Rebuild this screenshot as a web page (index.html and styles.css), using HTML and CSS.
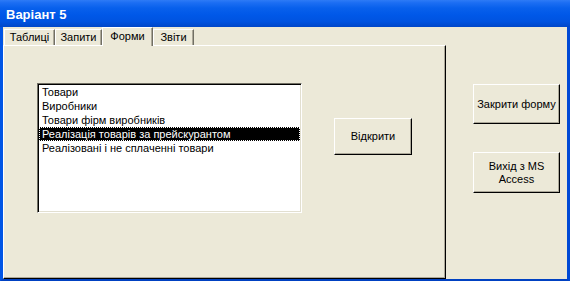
FILE: index.html
```html
<!DOCTYPE html>
<html>
<head>
<meta charset="utf-8">
<link rel="stylesheet" href="styles.css">
</head>
<body>
<div class="window">
  <div class="titlebar"><span class="title">Варіант 5</span></div>
  <div class="frame">
    <div class="tabctl">
      <div class="tabs">
        <div class="tab w1">Таблиці</div>
        <div class="tab w2">Запити</div>
        <div class="tab active w3">Форми</div>
        <div class="tab w4">Звіти</div>
      </div>
      <div class="panel">
        <div class="listbox">
          <div class="item">Товари</div>
          <div class="item">Виробники</div>
          <div class="item">Товари фірм виробників</div>
          <div class="item selected">Реалізація товарів за прейскурантом</div>
          <div class="item">Реалізовані і не сплаченні товари</div>
        </div>
        <button class="btn open">Відкрити</button>
      </div>
    </div>
    <div class="side">
      <button class="btn close">Закрити форму</button>
      <button class="btn exit">Вихід з MS<br>Access</button>
    </div>
  </div>
</div>
</body>
</html>
```

FILE: styles.css
```css
html, body {
  margin: 0;
  padding: 0;
  background: #ECE9D8;
}
body {
  font-family: "Liberation Sans", Arial, sans-serif;
  font-size: 11px;
  color: #000;
}
.window {
  width: 570px;
  height: 281px;
  display: flex;
  flex-direction: column;
  background: #ECE9D8;
}
.titlebar {
  height: 27px;
  flex: none;
  display: flex;
  align-items: center;
  padding-left: 6px;
  background: linear-gradient(to bottom, #2E7BF6 0%, #1C6EF3 10%, #0860EC 30%, #0058E8 55%, #0053E0 80%, #0046C8 100%);
}
.title {
  color: #fff;
  font-weight: bold;
  font-size: 13px;
  padding-top: 1px;
}
.frame {
  flex: 1;
  display: flex;
  border-left: 3px solid #0055E5;
  border-right: 3px solid #0049D5;
  border-bottom: 2px solid #0041C2;
  min-height: 0;
}
.tabctl {
  width: 443px;
  display: flex;
  flex-direction: column;
}
.tabs {
  height: 18px;
  display: flex;
  align-items: flex-end;
  padding-left: 1px;
}
.tab {
  box-sizing: border-box;
  height: 16px;
  border-top: 1px solid #fff;
  border-left: 1px solid #fff;
  border-right: 1px solid #716F64;
  box-shadow: inset -1px 0 #ACA899;
  text-align: center;
  line-height: 15px;
  background: #ECE9D8;
}
.w1 { width: 51px; }
.w2 { width: 47px; }
.w3 { width: 51px; }
.w4 { width: 41px; }
.tab.active {
  height: 19px;
  margin-bottom: -1px;
  line-height: 16px;
  z-index: 1;
}
.panel {
  box-sizing: border-box;
  flex: 1;
  display: flex;
  align-items: flex-start;
  border-top: 1px solid #fff;
  border-left: 1px solid #fff;
  border-right: 1px solid #000;
  border-bottom: 1px solid #000;
  box-shadow: inset -1px -1px #ACA899;
}
.listbox {
  box-sizing: border-box;
  width: 265px;
  height: 130px;
  margin-left: 33px;
  margin-top: 37px;
  background: #fff;
  border-top: 1px solid #716F64;
  border-left: 1px solid #716F64;
  border-right: 1px solid #fff;
  border-bottom: 1px solid #fff;
  box-shadow: inset 1px 1px #000, inset -1px -1px #E2DFD0;
  padding: 1px 1px 0 1px;
}
.item {
  box-sizing: border-box;
  height: 14px;
  line-height: 14px;
  padding-left: 3px;
  white-space: nowrap;
}
.item.selected {
  background: #000;
  color: #fff;
  outline: 1px dotted #fff;
  outline-offset: -1px;
}
.btn {
  box-sizing: border-box;
  font-family: "Liberation Sans", Arial, sans-serif;
  font-size: 11px;
  color: #000;
  background: #ECE9D8;
  border-top: 1px solid #fff;
  border-left: 1px solid #fff;
  border-right: 1px solid #000;
  border-bottom: 1px solid #000;
  box-shadow: inset -1px -1px #ACA899;
  padding: 0;
  line-height: 13px;
}
.open {
  width: 78px;
  height: 37px;
  margin-left: 32px;
  margin-top: 72px;
}
.side {
  flex: 1;
  display: flex;
  flex-direction: column;
  padding-left: 27px;
  padding-top: 57px;
  gap: 28px;
}
.close {
  width: 87px;
  height: 40px;
}
.exit {
  width: 87px;
  height: 41px;
}
```
